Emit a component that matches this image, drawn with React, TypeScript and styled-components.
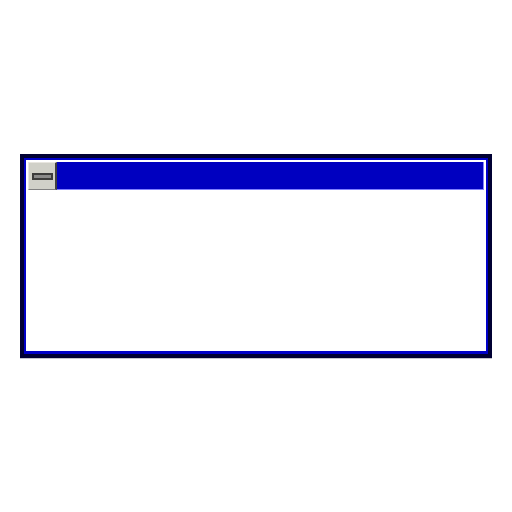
import React from "react";
import styled, { createGlobalStyle } from "styled-components";

const GlobalStyle = createGlobalStyle`
  html, body {
    margin: 0;
    padding: 0;
    background: #ffffff;
    font-family: "Liberation Sans", Arial, sans-serif;
  }
`;

const Page = styled.div`
  display: flex;
  align-items: center;
  justify-content: center;
  width: 100vw;
  height: 100vh;
`;

const WindowFrame = styled.div`
  box-sizing: border-box;
  width: 472px;
  height: 204px;
  border: 4px solid #000033;
  box-shadow: 0 1px 0 #c4c4cc;
`;

const WindowInner = styled.div`
  box-sizing: border-box;
  display: flex;
  flex-direction: column;
  height: 100%;
  border: 2px solid #0000c8;
  border-bottom-width: 3px;
  background: #ffffff;
  padding: 2px 2px 0 2px;
`;

const TitleBar = styled.div`
  display: flex;
  height: 28px;
  flex-shrink: 0;
`;

const MinimizeButton = styled.button`
  box-sizing: border-box;
  display: flex;
  align-items: center;
  justify-content: center;
  width: 29px;
  height: 28px;
  padding: 0;
  margin: 0;
  background: #d0d0c8;
  border: none;
  border-top: 1px solid #e8e6e0;
  border-left: 1px solid #e8e6e0;
  border-right: 2px solid #404040;
  border-bottom: 1px solid #808080;
  cursor: pointer;
`;

const MinusBar = styled.span`
  box-sizing: border-box;
  display: block;
  width: 21px;
  height: 7px;
  margin-top: 1px;
  background: #8a8a8a;
  border: 2px solid #3c3c3c;
`;

const TitleFill = styled.div`
  flex: 1;
  box-sizing: border-box;
  background: #0000c0;
  border-right: 1px solid #8080ff;
  border-bottom: 1px solid #8080ff;
`;

const Content = styled.div`
  flex: 1;
  background: #ffffff;
`;

export default function App() {
  return (
    <>
      <GlobalStyle />
      <Page>
        <WindowFrame>
          <WindowInner>
            <TitleBar>
              <MinimizeButton aria-label="Minimize">
                <MinusBar />
              </MinimizeButton>
              <TitleFill />
            </TitleBar>
            <Content />
          </WindowInner>
        </WindowFrame>
      </Page>
    </>
  );
}
